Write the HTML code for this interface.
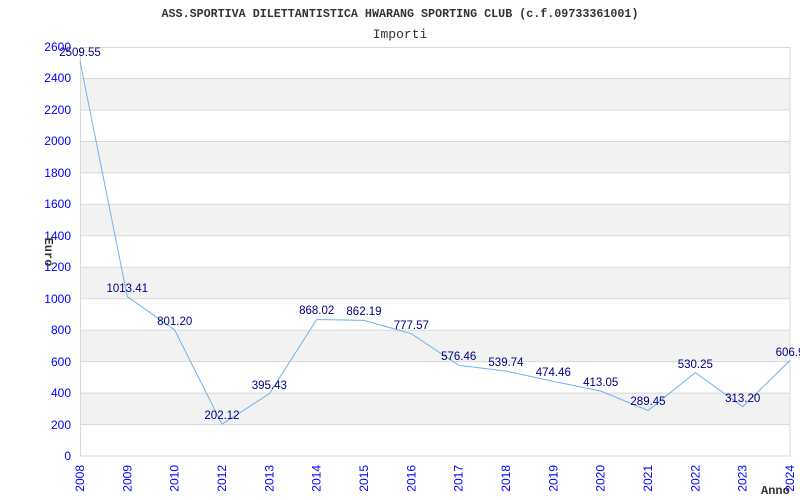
<!DOCTYPE html>
<html><head><style>body{margin:0;background:#fff}svg{display:block}</style></head><body>
<svg width="800" height="500" xmlns="http://www.w3.org/2000/svg">
<rect width="800" height="500" fill="#fff"/>
<g fill="#f2f2f2">
<rect x="80" y="393.1" width="710" height="31.5"/>
<rect x="80" y="330.2" width="710" height="31.5"/>
<rect x="80" y="267.3" width="710" height="31.5"/>
<rect x="80" y="204.4" width="710" height="31.5"/>
<rect x="80" y="141.5" width="710" height="31.5"/>
<rect x="80" y="78.5" width="710" height="31.5"/>
</g>
<g stroke="#d9d9d9" stroke-width="1">
<line x1="80" x2="790" y1="424.5" y2="424.5"/><line x1="80" x2="790" y1="393.1" y2="393.1"/>
<line x1="80" x2="790" y1="361.6" y2="361.6"/><line x1="80" x2="790" y1="330.2" y2="330.2"/>
<line x1="80" x2="790" y1="298.7" y2="298.7"/><line x1="80" x2="790" y1="267.3" y2="267.3"/>
<line x1="80" x2="790" y1="235.8" y2="235.8"/><line x1="80" x2="790" y1="204.4" y2="204.4"/>
<line x1="80" x2="790" y1="172.9" y2="172.9"/><line x1="80" x2="790" y1="141.5" y2="141.5"/>
<line x1="80" x2="790" y1="110" y2="110"/><line x1="80" x2="790" y1="78.5" y2="78.5"/>
<line x1="80" x2="790" y1="47.5" y2="47.5"/>
<rect x="80.5" y="47.5" width="709.5" height="408.5" fill="none"/>
</g>
<text x="400" y="17" text-anchor="middle" font-family="Liberation Mono,monospace" font-weight="bold" font-size="11.7" fill="#333">ASS.SPORTIVA DILETTANTISTICA HWARANG SPORTING CLUB (c.f.09733361001)</text>
<text x="400" y="38" text-anchor="middle" font-family="Liberation Mono,monospace" font-size="13" fill="#333">Importi</text>
<g font-family="Liberation Sans,sans-serif" font-size="12" fill="#0000ff" text-anchor="end">
<text x="71" y="460">0</text><text x="71" y="429">200</text><text x="71" y="397">400</text>
<text x="71" y="366">600</text><text x="71" y="334">800</text><text x="71" y="303">1000</text>
<text x="71" y="271">1200</text><text x="71" y="240">1400</text><text x="71" y="208">1600</text>
<text x="71" y="177">1800</text><text x="71" y="145">2000</text><text x="71" y="114">2200</text>
<text x="71" y="82">2400</text><text x="71" y="51">2600</text>
</g>
<g font-family="Liberation Sans,sans-serif" font-size="12" fill="#0000ff" text-anchor="end">
<text transform="translate(84,465) rotate(-90)">2008</text>
<text transform="translate(131.3,465) rotate(-90)">2009</text>
<text transform="translate(178.7,465) rotate(-90)">2010</text>
<text transform="translate(226,465) rotate(-90)">2012</text>
<text transform="translate(273.3,465) rotate(-90)">2013</text>
<text transform="translate(320.7,465) rotate(-90)">2014</text>
<text transform="translate(368,465) rotate(-90)">2015</text>
<text transform="translate(415.3,465) rotate(-90)">2016</text>
<text transform="translate(462.7,465) rotate(-90)">2017</text>
<text transform="translate(510,465) rotate(-90)">2018</text>
<text transform="translate(557.3,465) rotate(-90)">2019</text>
<text transform="translate(604.7,465) rotate(-90)">2020</text>
<text transform="translate(652,465) rotate(-90)">2021</text>
<text transform="translate(699.3,465) rotate(-90)">2022</text>
<text transform="translate(746.7,465) rotate(-90)">2023</text>
<text transform="translate(794,465) rotate(-90)">2024</text>
</g>
<text transform="translate(45,252) rotate(90)" text-anchor="middle" font-family="Liberation Mono,monospace" font-weight="bold" font-size="12" fill="#333">Euro</text>
<text x="761" y="494" font-family="Liberation Mono,monospace" font-weight="bold" font-size="12" fill="#333">Anno</text>
<polyline fill="none" stroke="#6fb2f0" stroke-width="1" points="80,61.2 127.3,296.6 174.7,330 222,424.2 269.3,393.8 316.7,319.5 364,320.4 411.3,333.7 458.7,365.3 506,371.1 553.3,381.4 600.7,391 648,410.5 695.3,372.6 742.7,406.7 790,360.5"/>
<g font-family="Liberation Sans,sans-serif" font-size="11.5" fill="#00007f" text-anchor="middle">
<text x="80" y="56">2509.55</text>
<text x="127.3" y="292">1013.41</text>
<text x="174.7" y="325">801.20</text>
<text x="222" y="419">202.12</text>
<text x="269.3" y="389">395.43</text>
<text x="316.7" y="314">868.02</text>
<text x="364" y="315">862.19</text>
<text x="411.3" y="329">777.57</text>
<text x="458.7" y="360">576.46</text>
<text x="506" y="366">539.74</text>
<text x="553.3" y="376">474.46</text>
<text x="600.7" y="386">413.05</text>
<text x="648" y="405">289.45</text>
<text x="695.3" y="368">530.25</text>
<text x="742.7" y="402">313.20</text>
<text x="790" y="356">606.9</text>
</g>
</svg>
</body></html>
